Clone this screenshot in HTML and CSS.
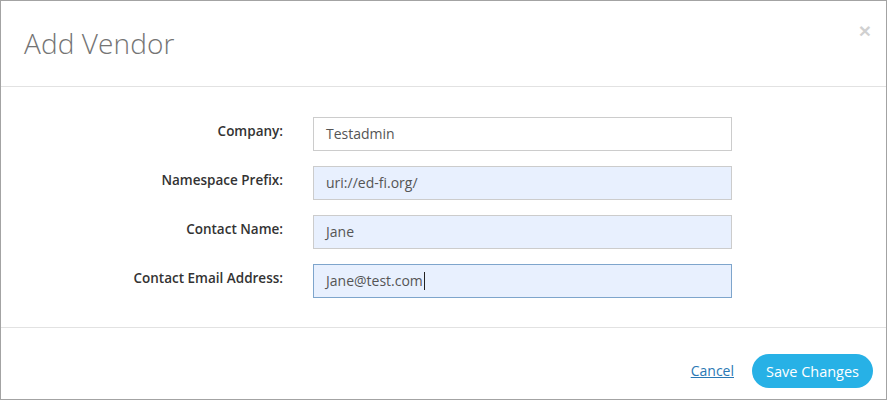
FILE: index.html
```html
<!DOCTYPE html>
<html>
<head>
<meta charset="utf-8">
<link rel="stylesheet" href="styles.css">
</head>
<body>
<div class="modal">
  <div class="modal-header">
    <h1 class="title">Add Vendor</h1>
    <span class="close">&times;</span>
  </div>
  <div class="modal-body">
    <div class="form">
      <label class="label">Company:</label>
      <div class="field">Testadmin</div>
      <label class="label">Namespace Prefix:</label>
      <div class="field autofill">uri://ed-fi.org/</div>
      <label class="label">Contact Name:</label>
      <div class="field autofill">Jane</div>
      <label class="label">Contact Email Address:</label>
      <div class="field autofill focus">Jane@test.com<span class="caret"></span></div>
    </div>
  </div>
  <div class="modal-footer">
    <a class="cancel" href="#">Cancel</a>
    <button class="btn-save">Save Changes</button>
  </div>
</div>
</body>
</html>
```

FILE: styles.css
```css
html, body {
  margin: 0;
  padding: 0;
  background: #ffffff;
}
body {
  font-family: "Open Sans", "Noto Sans", sans-serif;
  font-size: 14px;
  color: #333;
}
.modal {
  width: 885px;
  height: 398px;
  border: 1px solid #a3a3a3;
  display: flex;
  flex-direction: column;
  background: #fff;
}
.modal-header {
  height: 86px;
  flex: none;
  border-bottom: 1px solid #e2e2e2;
  display: flex;
  align-items: center;
  justify-content: space-between;
  padding: 0 15px 0 23px;
  box-sizing: border-box;
}
.title {
  margin: 0;
  font-size: 28px;
  font-weight: 300;
  color: #747474;
  letter-spacing: 0.1px;
  line-height: 1;
  padding-bottom: 2px;
}
.close {
  font-family: "Liberation Sans", Arial, sans-serif;
  font-size: 21px;
  font-weight: bold;
  color: #000;
  opacity: 0.18;
  line-height: 1;
  margin-top: -26px;
}
.modal-body {
  height: 241px;
  flex: none;
  box-sizing: border-box;
  padding: 30px 0 0 0;
  border-bottom: 1px solid #e2e2e2;
}
.form {
  display: grid;
  grid-template-columns: 282px 419px;
  column-gap: 30px;
  row-gap: 15px;
}
.label {
  text-align: right;
  font-weight: 600;
  font-size: 13.5px;
  color: #333;
  padding-top: 4px;
  line-height: 20px;
}
.field {
  height: 34px;
  box-sizing: border-box;
  border: 1px solid #cccccc;
  padding: 6px 12px;
  line-height: 20px;
  color: #555;
  background: #fff;
  display: flex;
  align-items: center;
}
.field.autofill {
  background: #e8f0fe;
}
.field.focus {
  border-color: #7ea5cc;
}
.caret {
  display: inline-block;
  width: 1px;
  height: 18px;
  background: #222;
  margin-left: 1px;
}
.modal-footer {
  flex: 1;
  display: flex;
  justify-content: flex-end;
  align-items: flex-start;
  padding: 26px 13px 0 0;
  box-sizing: border-box;
  gap: 18px;
}
.cancel {
  color: #2a78b4;
  text-decoration: underline;
  font-size: 14px;
  line-height: 34px;
}
.btn-save {
  font-family: "Open Sans", "Noto Sans", sans-serif;
  font-size: 14.5px;
  color: #fff;
  background: #27b1e6;
  border: none;
  border-radius: 17px;
  height: 34px;
  width: 121px;
  padding: 0;
  cursor: pointer;
}
```
